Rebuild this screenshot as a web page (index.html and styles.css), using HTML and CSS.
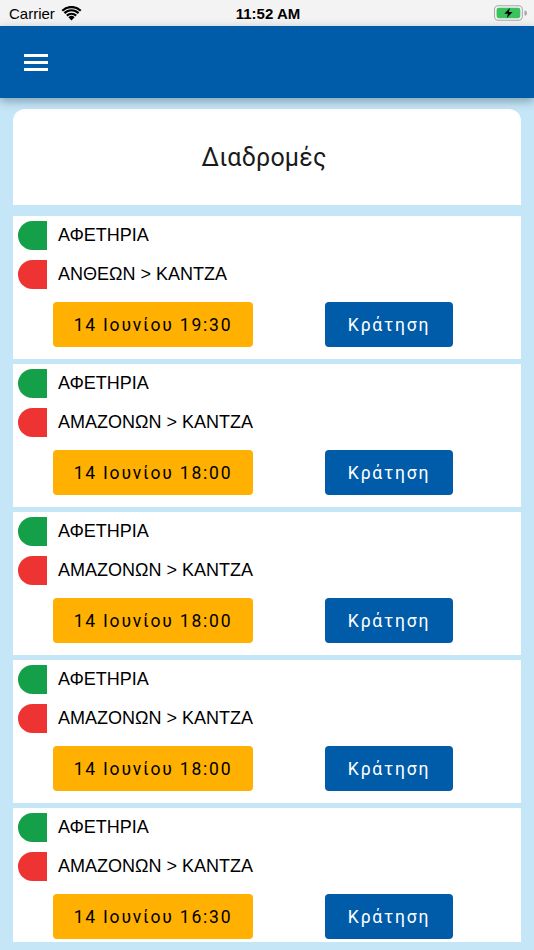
FILE: index.html
```html
<!DOCTYPE html>
<html>
<head>
	<meta charset="utf-8">
	<title>Διαδρομές</title>
	<meta name="viewport" content="width=device-width, initial-scale=1.0">
	<link rel="stylesheet" href="styles.css">
</head>
<body>
	<!-- ios status bar -->
	<div class="status-bar">
		<div class="carrier">
			Carrier
			<svg class="wifi" width="21" height="15" viewBox="0 0 20 15">
				<path d="M10 14.5 L6.9 11.2 A4.5 4.5 0 0 1 13.1 11.2 Z" fill="#000"/>
				<path d="M4.6 8.8 A7.8 7.8 0 0 1 15.4 8.8 L13.9 10.4 A5.7 5.7 0 0 0 6.1 10.4 Z" fill="#000"/>
				<path d="M2.2 6.3 A11.2 11.2 0 0 1 17.8 6.3 L16.3 7.9 A9.1 9.1 0 0 0 3.7 7.9 Z" fill="#000"/>
				<path d="M0 3.9 A14.5 14.5 0 0 1 20 3.9 L18.5 5.5 A12.4 12.4 0 0 0 1.5 5.5 Z" fill="#000"/>
			</svg>
		</div>
		<div class="clock">11:52 AM</div>
		<div class="battery">
			<svg width="33" height="16" viewBox="0 0 32 15">
				<rect x="0.5" y="0.5" width="27" height="14" rx="3.5" fill="none" stroke="#a9a9a9"/>
				<rect x="2.5" y="2.5" width="23" height="10" rx="2" fill="#3ac25c"/>
				<path d="M29.5 5 v5 a2 2 0 0 0 0 -5z" fill="#a9a9a9"/>
				<path d="M15.5 2.5 L10 8.3 H13.6 L12.3 12.6 L18 6.6 H14.4 Z" fill="#000"/>
			</svg>
		</div>
	</div>

	<div class="app-bar">
		<button class="menu-btn" type="button" aria-label="menu">
			<span></span><span></span><span></span>
		</button>
	</div>

	<div class="content">
		<div class="scroller">
			<div class="title-card">
				<h1>Διαδρομές</h1>
			</div>

			<div class="route-card">
				<div class="stop"><span class="pill green"></span>ΑΦΕΤΗΡΙΑ</div>
				<div class="stop"><span class="pill red"></span>ΑΝΘΕΩΝ &gt; ΚΑΝΤΖΑ</div>
				<div class="actions">
					<div class="date-btn">14 Ιουνίου 19:30</div>
					<button class="book-btn" type="button">Κράτηση</button>
				</div>
			</div>

			<div class="route-card">
				<div class="stop"><span class="pill green"></span>ΑΦΕΤΗΡΙΑ</div>
				<div class="stop"><span class="pill red"></span>ΑΜΑΖΟΝΩΝ &gt; ΚΑΝΤΖΑ</div>
				<div class="actions">
					<div class="date-btn">14 Ιουνίου 18:00</div>
					<button class="book-btn" type="button">Κράτηση</button>
				</div>
			</div>

			<div class="route-card">
				<div class="stop"><span class="pill green"></span>ΑΦΕΤΗΡΙΑ</div>
				<div class="stop"><span class="pill red"></span>ΑΜΑΖΟΝΩΝ &gt; ΚΑΝΤΖΑ</div>
				<div class="actions">
					<div class="date-btn">14 Ιουνίου 18:00</div>
					<button class="book-btn" type="button">Κράτηση</button>
				</div>
			</div>

			<div class="route-card">
				<div class="stop"><span class="pill green"></span>ΑΦΕΤΗΡΙΑ</div>
				<div class="stop"><span class="pill red"></span>ΑΜΑΖΟΝΩΝ &gt; ΚΑΝΤΖΑ</div>
				<div class="actions">
					<div class="date-btn">14 Ιουνίου 18:00</div>
					<button class="book-btn" type="button">Κράτηση</button>
				</div>
			</div>

			<div class="route-card">
				<div class="stop"><span class="pill green"></span>ΑΦΕΤΗΡΙΑ</div>
				<div class="stop"><span class="pill red"></span>ΑΜΑΖΟΝΩΝ &gt; ΚΑΝΤΖΑ</div>
				<div class="actions">
					<div class="date-btn">14 Ιουνίου 16:30</div>
					<button class="book-btn" type="button">Κράτηση</button>
				</div>
			</div>
		</div>
	</div>
</body>
</html>
```

FILE: styles.css
```css
body {
    margin: 0;
    width: 534px;
    height: 950px;
    overflow: hidden;
    background-color: #c5e6f7;
    font-family: "Liberation Sans", Arial, sans-serif;
}

/* status bar */
.status-bar {
    height: 26px;
    background-color: #f3f3f3;
    display: flex;
    align-items: center;
    justify-content: space-between;
    padding: 0 7px 0 9px;
    font-size: 15px;
    color: #000;
}

.carrier {
    display: flex;
    align-items: center;
    gap: 6px;
    width: 120px;
}

.clock {
    font-weight: bold;
}

.battery {
    width: 120px;
    display: flex;
    justify-content: flex-end;
}

/* blue app bar */
.app-bar {
    height: 72px;
    background-color: #005ca9;
    display: flex;
    align-items: center;
    padding-left: 24px;
    position: relative;
    z-index: 1;
    box-shadow: 0 3px 9px rgba(40, 70, 90, 0.45);
}

.menu-btn {
    background: none;
    border: none;
    padding: 0;
    width: 24px;
    display: flex;
    flex-direction: column;
    gap: 4px;
}

.menu-btn span {
    display: block;
    height: 3px;
    background-color: #fff;
}

/* scroll area */
.content {
    height: 852px;
    box-sizing: border-box;
    padding: 11px 13px 8px 13px;
}

.scroller {
    height: 100%;
    overflow: hidden;
    display: flex;
    flex-direction: column;
    gap: 5px;
}

.title-card {
    flex-shrink: 0;
    height: 96px;
    background-color: #fff;
    border-radius: 12px 12px 0 0;
    display: flex;
    align-items: center;
    justify-content: center;
    padding-right: 6px;
    margin-bottom: 6px;
}

.title-card h1 {
    margin: 0;
    font-family: Roboto, "Noto Sans", sans-serif;
    font-weight: normal;
    font-size: 25px;
    color: #1a1a1a;
    letter-spacing: 0.2px;
}

.route-card {
    flex-shrink: 0;
    height: 143px;
    box-sizing: border-box;
    background-color: #fff;
    padding: 5px 0 12px 5px;
    display: flex;
    flex-direction: column;
}

.stop {
    height: 29px;
    display: flex;
    align-items: center;
    gap: 11px;
    font-size: 18px;
    color: #000;
    margin-bottom: 10px;
}

.pill {
    width: 29px;
    height: 29px;
    border-radius: 15px 0 0 15px;
}

.pill.green {
    background-color: #14a049;
}

.pill.red {
    background-color: #ee3333;
}

.actions {
    display: flex;
    gap: 72px;
    padding-left: 35px;
    margin-top: 3px;
}

.date-btn,
.book-btn {
    height: 45px;
    border-radius: 4px;
    display: flex;
    align-items: center;
    justify-content: center;
    font-family: Roboto, "Noto Sans", sans-serif;
    font-size: 17.5px;
    letter-spacing: 1.8px;
}

.date-btn {
    width: 200px;
    background-color: #ffb000;
    color: #000;
}

.book-btn {
    width: 128px;
    border: none;
    background-color: #005ca9;
    color: #fff;
    padding: 0;
}
```
